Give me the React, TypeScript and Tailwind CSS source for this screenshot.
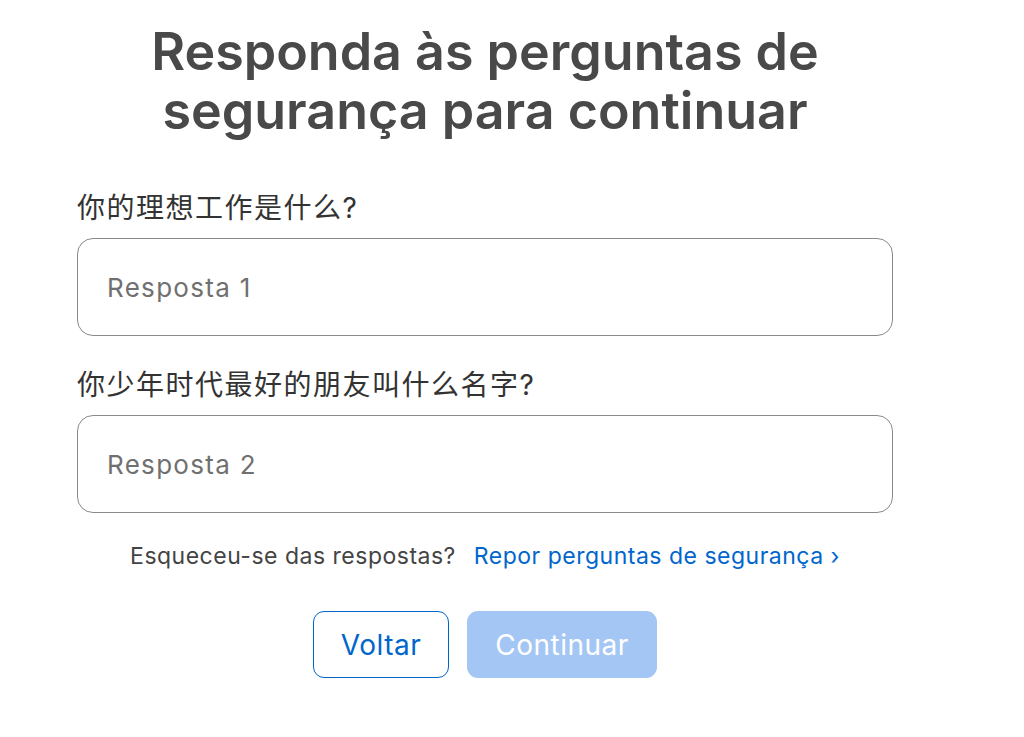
import React from 'react';

const font = { fontFamily: 'Inter, "Noto Sans CJK SC", sans-serif' };

export default function App() {
  return (
    <div className="min-h-[737px] bg-white" style={font}>
      <div className="w-[816px] ml-[77px] flex flex-col">
        <h1 className="mt-[22px] text-center text-[52px] leading-[59px] font-semibold text-[#494949]">
          Responda às perguntas de
          <br />
          segurança para continuar
        </h1>

        <label className="mt-[50px] text-[28px] leading-[36px] tracking-[1.5px] text-[#333333]">
          你的理想工作是什么?
        </label>
        <input
          className="mt-[12px] h-[98px] rounded-[16px] border-[1.5px] border-[#8a8a8a] px-[29px] text-[26px] tracking-[1.3px] text-[#333] placeholder:text-[#707070] outline-none"
          placeholder="Resposta 1"
        />

        <label className="mt-[31px] text-[28px] leading-[36px] tracking-[1.5px] text-[#333333]">
          你少年时代最好的朋友叫什么名字?
        </label>
        <input
          className="mt-[12px] h-[98px] rounded-[16px] border-[1.5px] border-[#8a8a8a] px-[29px] text-[26px] tracking-[1.3px] text-[#333] placeholder:text-[#707070] outline-none"
          placeholder="Resposta 2"
        />

        <p className="mt-[27px] text-center text-[23px] leading-[32px] tracking-[0.5px] text-[#444444]">
          Esqueceu-se das respostas?
          <a className="ml-[18px] text-[#0066cc]" href="#">
            Repor perguntas de segurança ›
          </a>
        </p>

        <div className="mt-[39px] flex justify-center gap-[18px]">
          <button className="h-[67px] w-[136px] rounded-[11px] border-[1.5px] border-[#0066cc] text-[28px] tracking-[0.5px] text-[#0066cc]">
            Voltar
          </button>
          <button
            disabled
            className="h-[67px] w-[190px] rounded-[11px] bg-[#a4c6f4] text-[28px] tracking-[0.5px] text-white"
          >
            Continuar
          </button>
        </div>
      </div>
    </div>
  );
}
